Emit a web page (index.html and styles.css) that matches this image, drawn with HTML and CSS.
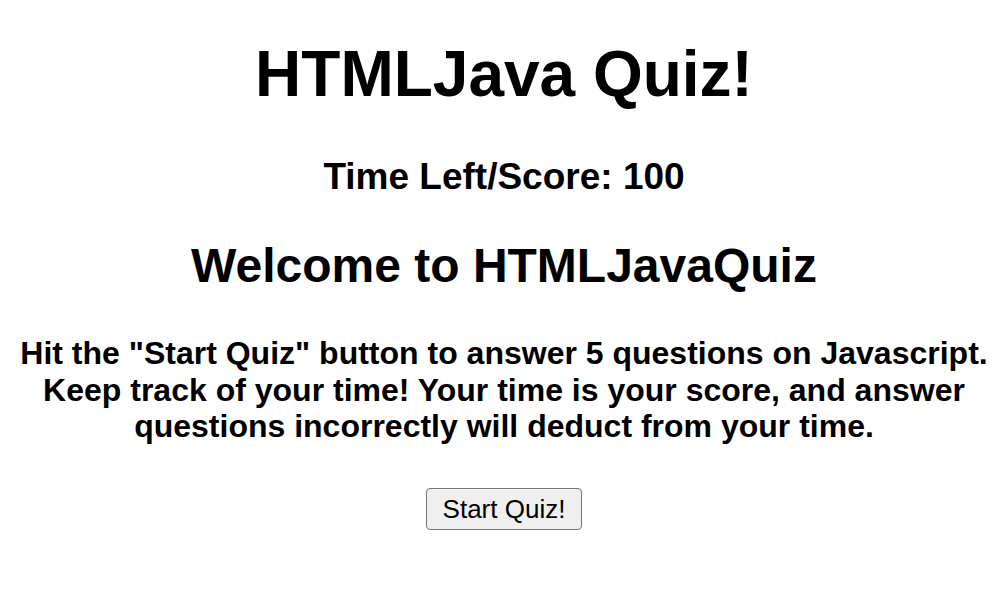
FILE: index.html
```html
<!DOCTYPE html>
<html>
<head>
<meta charset="utf-8">
<link rel="stylesheet" href="styles.css">
</head>
<body>
<main class="page">
  <h1 class="title">HTMLJava Quiz!</h1>
  <h2 class="timer">Time Left/Score: 100</h2>
  <h2 class="welcome">Welcome to HTMLJavaQuiz</h2>
  <p class="intro">Hit the "Start Quiz" button to answer 5 questions on Javascript. Keep track of your time! Your time is your score, and answer questions incorrectly will deduct from your time.</p>
  <button class="start">Start Quiz!</button>
</main>
</body>
</html>
```
FILE: styles.css
```css
body {
  margin: 8px;
  font-family: "Liberation Sans", Arial, sans-serif;
  color: #000;
  background: #fff;
}
.page {
  text-align: center;
  padding-left: 10px;
}
.title {
  font-size: 64px;
  font-weight: bold;
  margin: 29px 0 0;
  line-height: 74px;
}
.timer {
  font-size: 37px;
  margin: 44px 0 0;
  line-height: 43px;
}
.welcome {
  font-size: 48px;
  margin: 40px 0 0;
  line-height: 55px;
}
.intro {
  font-size: 32px;
  font-weight: bold;
  line-height: 36.5px;
  margin: 42px 0 0;
}
.start {
  display: block;
  margin: 43.5px auto 0;
  font-family: "Liberation Sans", Arial, sans-serif;
  font-size: 26px;
  line-height: 30px;
  padding: 5px 16px;
  background: #efefef;
  border: 1px solid #767676;
  border-radius: 4px;
  color: #000;
}
```
